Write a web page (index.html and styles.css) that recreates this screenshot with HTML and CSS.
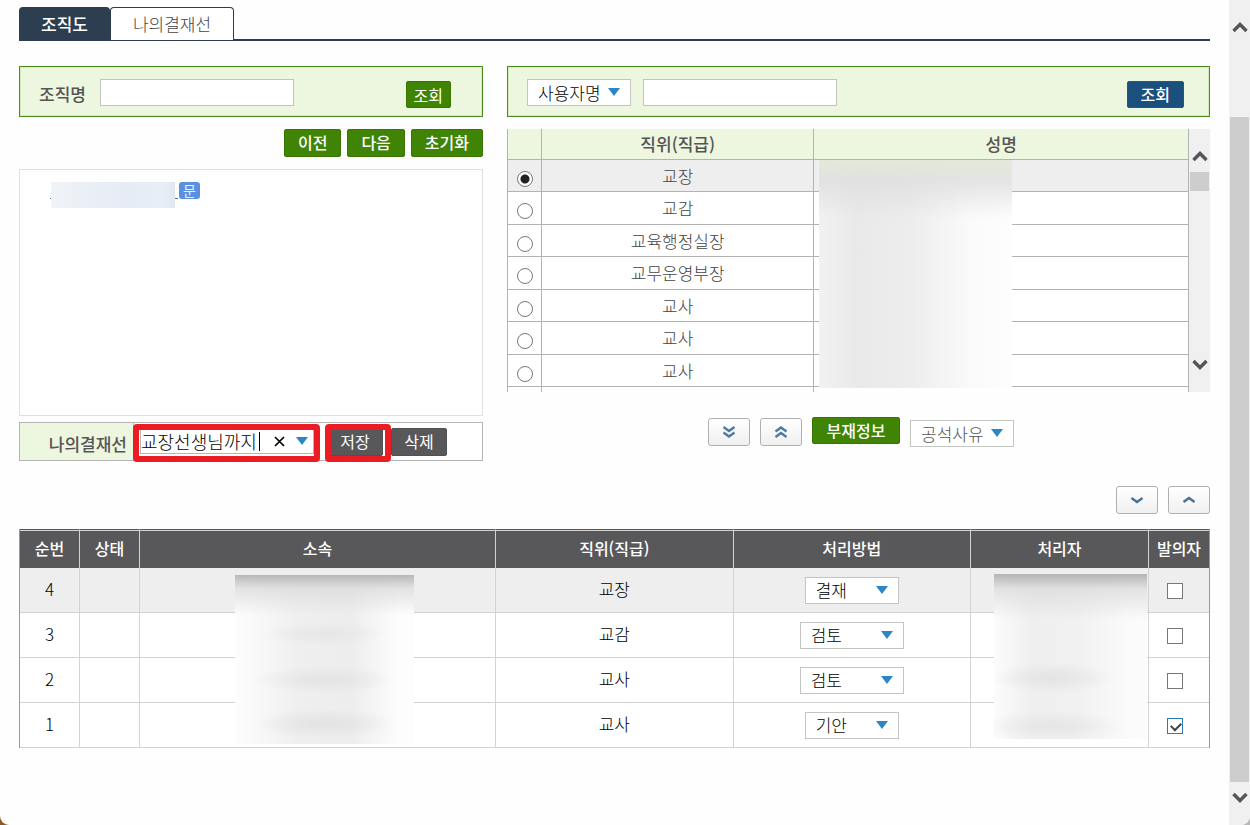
FILE: index.html
```html
<!DOCTYPE html>
<html lang="ko">

<head>
<meta charset="UTF-8">
<meta name="viewport" content="width=device-width, initial-scale=1.0">
<title>결재선 지정</title>
<link rel="stylesheet" href="styles.css">
</head>

<body>
<div class="window">
<main class="content">

<nav class="tabs">
<button type="button" class="tab active">조직도</button>
<button type="button" class="tab">나의결재선</button>
</nav>

<div class="columns">

<!-- 조직도 -->
<section class="org">
<form class="search">
<label for="org-name">조직명</label>
<input type="text" id="org-name" class="text-input">
<button type="button" class="btn search-btn">조회</button>
</form>

<div class="org-buttons">
<button type="button" class="btn bold">이전</button>
<button type="button" class="btn bold">다음</button>
<button type="button" class="btn bold">초기화</button>
</div>

<div class="org-tree">
<a href="#" class="org-link" aria-label="조직"><span class="mask mask-org"></span></a>
<span class="badge">문</span>
</div>

<div class="my-line">
<label for="line-name" class="my-line-label">나의결재선</label>
<div class="combo framed">
<input type="text" id="line-name" value="교장선생님까지">
<span class="caret"></span>
<button type="button" class="clear" aria-label="지우기">
<svg width="11" height="11" viewBox="0 0 11 11"><path d="M1 1L10 10M10 1L1 10" stroke="#000" stroke-width="1.7" fill="none"/></svg>
</button>
<span class="arrow"></span>
</div>
<div class="framed save"><button type="button" class="btn dark">저장</button></div>
<button type="button" class="btn dark delete">삭제</button>
</div>
</section>

<!-- 사용자 목록 -->
<section class="users">
<form class="search user-search">
<div class="select">
<select aria-label="검색조건"><option>사용자명</option></select>
</div>
<input type="text" class="text-input" aria-label="검색어">
<button type="button" class="btn bold blue">조회</button>
</form>

<div class="user-list">
<div class="user-scroll">
<table class="user-table">
<colgroup><col class="c-radio"><col class="c-pos"><col></colgroup>
<thead>
<tr><th></th><th>직위(직급)</th><th>성명</th></tr>
</thead>
<tbody>
<tr class="on"><td><input type="radio" name="user" aria-label="교장" checked></td><td>교장</td><td></td></tr>
<tr><td><input type="radio" name="user" aria-label="교감"></td><td>교감</td><td></td></tr>
<tr><td><input type="radio" name="user" aria-label="교육행정실장"></td><td>교육행정실장</td><td></td></tr>
<tr><td><input type="radio" name="user" aria-label="교무운영부장"></td><td>교무운영부장</td><td></td></tr>
<tr><td><input type="radio" name="user" aria-label="교사"></td><td>교사</td><td></td></tr>
<tr><td><input type="radio" name="user" aria-label="교사"></td><td>교사</td><td></td></tr>
<tr><td><input type="radio" name="user" aria-label="교사"></td><td>교사</td><td></td></tr>
<tr><td></td><td></td><td></td></tr>
</tbody>
</table>
<span class="mask mask-users"></span>
</div>
<div class="scrollbar list-bar">
<svg width="16" height="12" viewBox="0 0 16 12"><path d="M1.500 10L8 3.500L14.500 10" stroke="#555" stroke-width="3.400" fill="none"/></svg>
<span class="thumb"></span>
<svg class="down" width="16" height="12" viewBox="0 0 16 12"><path d="M1.500 2L8 8.500L14.500 2" stroke="#555" stroke-width="3.400" fill="none"/></svg>
</div>
</div>

<div class="user-buttons">
<button type="button" class="btn-icon" aria-label="추가">
<svg width="14" height="12" viewBox="0 0 14 12"><path d="M1.500 1L7 5L12.500 1M1.500 6.500L7 10.500L12.500 6.500" stroke="#4a7ba3" stroke-width="2.400" fill="none"/></svg>
</button>
<button type="button" class="btn-icon" aria-label="제거">
<svg width="14" height="12" viewBox="0 0 14 12"><path d="M1.500 5.500L7 1.500L12.500 5.500M1.500 11L7 7L12.500 11" stroke="#4a7ba3" stroke-width="2.400" fill="none"/></svg>
</button>
<button type="button" class="btn bold absent">부재정보</button>
<div class="select reason">
<select aria-label="공석사유"><option>공석사유</option></select>
</div>
</div>
</section>

</div>

<div class="order-buttons">
<button type="button" class="btn-icon" aria-label="아래로">
<svg width="14" height="8" viewBox="0 0 14 8"><path d="M1.500 2L7 6L12.500 2" stroke="#4a7191" stroke-width="2.400" fill="none"/></svg>
</button>
<button type="button" class="btn-icon" aria-label="위로">
<svg width="14" height="8" viewBox="0 0 14 8"><path d="M1.500 6L7 2L12.500 6" stroke="#4a7191" stroke-width="2.400" fill="none"/></svg>
</button>
</div>

<!-- 결재선 -->
<div class="line-wrap">
<table class="line-table">
<colgroup>
<col class="c-no"><col class="c-no"><col class="c-dept"><col class="c-rank"><col class="c-rank"><col class="c-person"><col class="c-no">
</colgroup>
<thead>
<tr><th>순번</th><th>상태</th><th>소속</th><th>직위(직급)</th><th>처리방법</th><th>처리자</th><th>발의자</th></tr>
</thead>
<tbody>
<tr class="on">
<td>4</td><td></td><td></td><td>교장</td>
<td><div class="select short"><select aria-label="처리방법"><option>결재</option></select></div></td>
<td></td><td><input type="checkbox" aria-label="발의자"></td>
</tr>
<tr>
<td>3</td><td></td><td></td><td>교감</td>
<td><div class="select"><select aria-label="처리방법"><option>검토</option></select></div></td>
<td></td><td><input type="checkbox" aria-label="발의자"></td>
</tr>
<tr>
<td>2</td><td></td><td></td><td>교사</td>
<td><div class="select"><select aria-label="처리방법"><option>검토</option></select></div></td>
<td></td><td><input type="checkbox" aria-label="발의자"></td>
</tr>
<tr>
<td>1</td><td></td><td></td><td>교사</td>
<td><div class="select short"><select aria-label="처리방법"><option>기안</option></select></div></td>
<td></td><td><input type="checkbox" aria-label="발의자" checked></td>
</tr>
</tbody>
</table>
<span class="mask mask-dept"></span>
<span class="mask mask-person"></span>
</div>

</main>

<div class="scrollbar page-bar">
<svg width="16" height="12" viewBox="0 0 16 12"><path d="M1.500 10L8 3.500L14.500 10" stroke="#555" stroke-width="3.400" fill="none"/></svg>
<span class="thumb"></span>
<svg class="down" width="16" height="12" viewBox="0 0 16 12"><path d="M1.500 2L8 8.500L14.500 2" stroke="#555" stroke-width="3.400" fill="none"/></svg>
</div>
</div>
</body>

</html>
```

FILE: styles.css
```css
* {
box-sizing: border-box;
}

body {
margin: 0;
background: linear-gradient(90deg, #8a5a20 50%, #b8b8b8 50%);
font-family: "Noto Sans CJK KR", sans-serif;
font-size: 17px;
font-weight: 300;
line-height: 24px;
color: #444;
}

button, input, select {
font-family: inherit;
font-size: inherit;
font-weight: inherit;
line-height: inherit;
margin: 0;
}

.window {
display: flex;
min-height: 100vh;
background: #fefefe;
border-radius: 0 0 9px 9px;
overflow: hidden;
}

.content {
flex: 1;
min-width: 0;
padding: 7px 19px 0;
}

/* 탭 */
.tabs {
display: flex;
height: 34px;
border-bottom: 2px solid #2f3a55;
}

.tab {
width: 124px;
height: 33px;
padding: 0;
border: 1px solid #2f3a55;
border-bottom: none;
border-radius: 4px 4px 0 0;
background: #fff;
color: #444;
}

.tab.active {
width: 91px;
background: #2c3e50;
color: #fff;
font-weight: 500;
}

.columns {
display: grid;
grid-template-columns: minmax(0, 464fr) minmax(0, 703fr);
gap: 24px;
margin-top: 25px;
}

/* 검색 */
.search {
display: flex;
align-items: flex-start;
height: 51px;
padding: 12px 31px 0 19px;
border: 1px solid #4b8b1c;
box-shadow: inset 0 0 0 1px #d3edb4;
background: #edf6df;
}

.search label {
margin: 3px 14px 0 0;
color: #555;
font-weight: 500;
}

.text-input {
width: 194px;
height: 27px;
padding: 0 6px;
border: 1px solid #c3c6c0;
background: #fff;
}

.user-search {
padding: 12px 25px 0 19px;
gap: 12px;
}

.search .btn {
height: 27px;
margin: 2px 0 0 auto;
}

.btn {
height: 28px;
padding: 0 13px 2px;
border: 1px solid #3a7500;
border-radius: 2px;
background: #3f8405;
color: #fff;
font-size: 16px;
font-weight: 400;
line-height: 24px;
white-space: nowrap;
}

.btn.bold {
font-weight: 500;
}

.btn.search-btn {
padding: 0 7px;
}

.btn.blue {
border-color: #2c6238;
background: #1b4f7d;
}

.btn.dark {
display: block;
width: 56px;
padding: 0 0 2px;
border-color: #505052;
background: #58585a;
}

.org-buttons {
display: flex;
justify-content: flex-end;
gap: 6px;
margin: 12px 0;
}

.org-tree {
display: flex;
align-items: flex-start;
gap: 1px;
height: 247px;
padding: 12px 30px;
border: 1px solid #e0e0e0;
background: #fff;
}

.org-link {
position: relative;
width: 128px;
height: 17px;
border-bottom: 1px solid #56708c;
}

.badge {
width: 21px;
height: 17px;
border-radius: 3px;
background: #5b90e0;
color: #e8f1ff;
font-size: 14px;
font-weight: 400;
line-height: 16px;
text-align: center;
}

/* 나의결재선 */
.my-line {
display: flex;
align-items: flex-start;
height: 39px;
margin-top: 6px;
border: 1px solid #b5b5b5;
background: #fff;
}

.my-line-label {
width: 114px;
height: 37px;
padding: 9px 6px 0 0;
border-right: 1px solid #b5b5b5;
background: #edf6df;
color: #555;
text-align: right;
font-weight: 500;
}

.framed {
position: relative;
}

.framed::after {
content: "";
position: absolute;
inset: -5px -7px -9px -8px;
border: 6px solid #ec1c24;
border-radius: 4px;
pointer-events: none;
}

.combo {
display: flex;
align-items: center;
width: 174px;
height: 26px;
margin: 5px 0 0 6px;
border: 1px solid #b5b5b5;
background: #fff;
}

.combo input {
width: 118px;
height: 24px;
padding: 0;
border: none;
background: none;
color: #000;
font-size: 18px;
outline: none;
}

.caret {
width: 1px;
height: 19px;
background: #000;
}

.clear {
display: flex;
margin-left: 14px;
padding: 0;
border: none;
background: none;
}

.arrow {
margin-left: 11px;
border: 6px solid transparent;
border-top: 8px solid #2a86c4;
border-bottom: none;
}

.save {
margin: 5px 8px 0 13px;
}

.save::after {
inset: -4px -8px -6px -2px;
}

.delete {
margin-top: 5px;
}

/* 드롭다운 */
.select {
display: inline-block;
position: relative;
width: 104px;
height: 27px;
vertical-align: top;
}

.select select {
width: 100%;
height: 27px;
padding: 0 0 0 10px;
border: 1px solid #c3c6c0;
border-radius: 0;
background: #fff;
color: #000;
appearance: none;
}

.select::after {
content: "";
position: absolute;
top: 9px;
right: 11px;
border: 6px solid transparent;
border-top: 8px solid #2a86c4;
border-bottom: none;
pointer-events: none;
}

.select.short {
width: 94px;
}

.select.reason select {
color: #555;
}

/* 사용자 목록 */
.user-list {
display: flex;
height: 263px;
margin-top: 12px;
}

.user-scroll {
flex: 1;
position: relative;
overflow: hidden;
}

.user-table, .line-table {
width: 100%;
table-layout: fixed;
border-collapse: separate;
border-spacing: 0;
text-align: center;
}

.user-table {
border-left: 1px solid #b3b3b3;
}

.c-radio {
width: 34px;
}

.c-pos {
width: 40%;
}

.user-table th, .user-table td {
height: 32px;
padding: 0;
border-right: 1px solid #b3b3b3;
border-bottom: 1px solid #b3b3b3;
background: #fff;
}

.user-table th {
height: 31px;
background: #edf6df;
color: #555;
font-weight: 500;
}

.user-table tr:nth-child(even) td {
height: 33px;
}

.user-table .on td, .line-table .on td {
background: #eee;
}

input[type="radio"] {
display: block;
width: 16px;
height: 16px;
margin: 6px auto 0;
border: 1px solid #777;
border-radius: 50%;
background: #fff;
appearance: none;
}

input[type="radio"]:checked {
background: radial-gradient(circle, #222 4px, #fff 5px);
}

.user-buttons {
display: flex;
justify-content: center;
gap: 10px;
margin-top: 25px;
padding-left: 5px;
}

.btn-icon {
display: flex;
align-items: center;
justify-content: center;
width: 42px;
height: 28px;
padding: 0;
border: 1px solid #b0b0b0;
border-radius: 3px;
background: linear-gradient(#fff, #f0f0f0);
}

.user-buttons .btn-icon {
margin-top: 1px;
}

.btn.absent {
width: 88px;
height: 27px;
}

.reason {
margin-top: 3px;
}

.order-buttons {
display: flex;
justify-content: flex-end;
gap: 10px;
margin: 25px 0 15px;
}

/* 결재선 표 */
.line-wrap {
position: relative;
}

.line-table {
border-left: 1px solid #999;
border-right: 1px solid #999;
color: #000;
}

.line-table th, .line-table td {
padding: 0 0 2px;
border-right: 1px solid #d2d2d2;
}

.line-table th:last-child, .line-table td:last-child {
border-right: none;
}

.line-table th {
height: 39px;
border-top: 1px solid #58585a;
background: #58585a;
box-shadow: inset 0 1px #d2d2d2;
color: #fff;
font-size: 16px;
font-weight: 500;
}

.line-table td {
height: 45px;
border-bottom: 1px solid #d2d2d2;
background: #fff;
}

.line-table .select {
margin-top: 2px;
}

.c-no {
width: 60px;
}

.c-dept {
width: 30%;
}

.c-rank {
width: 20%;
}

.c-person {
width: 15%;
}

input[type="checkbox"] {
display: block;
position: relative;
width: 16px;
height: 16px;
margin: 3px 0 0 18px;
border: 1px solid #777;
background: #fff;
appearance: none;
}

input[type="checkbox"]:checked {
border-color: #2a7ab8;
}

input[type="checkbox"]:checked::after {
content: "";
position: absolute;
left: 3px;
top: 3px;
width: 8px;
height: 5px;
border: solid #444;
border-width: 0 0 2px 2px;
transform: rotate(-45deg);
}

/* 개인정보 가림 */
.mask {
position: absolute;
pointer-events: none;
}

.mask-org {
top: 0;
left: 1px;
right: 3px;
height: 26px;
background: linear-gradient(90deg, #f0f3f7, #e6ecf6 60%, #e8eef8 90%, #dfe7f0);
}

.mask-users {
top: 31px;
left: 312px;
width: 193px;
height: 228px;
background:
linear-gradient(#e3e9d8, rgba(222, 222, 222, 0.8) 9%, rgba(240, 240, 240, 0) 26%),
linear-gradient(90deg, #f2f2f2, #e9e9e9 20%, #ededed 48%, #fafafa 78%, #fdfdfd);
}

.mask-dept {
top: 46px;
left: 18%;
width: 179px;
height: 169px;
margin-left: 2px;
background:
linear-gradient(#b8b8b8, rgba(220, 220, 220, 0.8) 8%, rgba(240, 240, 240, 0) 24%),
radial-gradient(60px 12px at 50% 35%, #e6e6e6, transparent),
radial-gradient(70px 14px at 50% 62%, #e3e3e3, transparent),
radial-gradient(70px 16px at 50% 88%, #e2e2e2, transparent),
linear-gradient(90deg, #fdfdfd, #efefef 35%, #ededed 65%, #fdfdfd 92%);
}

.mask-person {
top: 45px;
right: 63px;
width: 153px;
height: 165px;
background:
linear-gradient(#b4b4b4, rgba(220, 220, 220, 0.8) 9%, rgba(240, 240, 240, 0) 28%),
radial-gradient(60px 16px at 38% 63%, #e3e3e3, transparent),
radial-gradient(70px 16px at 38% 92%, #e5e5e5, transparent),
linear-gradient(90deg, #fcfcfc, #efefef 25%, #f1f1f1 55%, #fbfbfb 90%);
}

/* 스크롤바 */
.scrollbar {
display: flex;
flex-direction: column;
align-items: center;
width: 21px;
background: #f0f0f0;
}

.scrollbar .thumb {
width: 19px;
background: #cdcdcd;
}

.scrollbar .down {
margin-top: auto;
}

.list-bar {
padding: 21px 0;
}

.list-bar .thumb {
height: 19px;
margin-top: 10px;
}

.page-bar {
padding: 21px 0;
}

.page-bar .thumb {
flex: 1;
margin: 84px 0 10px;
}
```
